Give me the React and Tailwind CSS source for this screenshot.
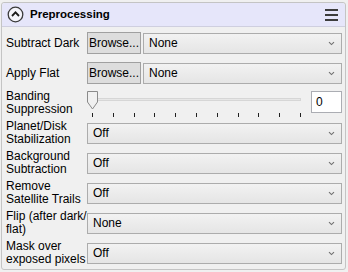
import React from 'react';

const font = { fontFamily: '"Liberation Sans", Arial, sans-serif' };

function Chevron() {
  return (
    <svg width="7" height="5" viewBox="0 0 7 5" className="text-[#707070]">
      <path d="M1 1.2 L3.5 3.6 L6 1.2" fill="none" stroke="currentColor" strokeWidth="1.1" />
    </svg>
  );
}

function Select({ value }) {
  return (
    <div className="flex-1 h-[21px] flex items-center justify-between pl-[5px] pr-[6px] border border-[#acacac] bg-gradient-to-b from-[#f2f2f2] to-[#e5e5e5] text-[12px]">
      <span>{value}</span>
      <Chevron />
    </div>
  );
}

function Row({ label, children }) {
  return (
    <div className="h-[30px] flex items-center">
      <div className="w-[85px] pl-[4px] text-[12px] leading-[13px] shrink-0">{label}</div>
      <div className="flex-1 flex items-center pr-[3px]">{children}</div>
    </div>
  );
}

export default function App() {
  const ticks = Array.from({ length: 11 }, (_, i) => i);

  return (
    <div className="w-[348px] h-[272px] bg-[#f0f0f0] pt-[2px] pl-[1px] pr-[2px] text-black" style={font}>
      <div className="border border-[#c4c4c4] rounded-[3px] h-[268px] flex flex-col">
        <div className="h-[24px] bg-[#e6e6fa] border-b border-[#cfcfdf] flex items-center pl-[5px] pr-[7px] rounded-t-[3px]">
          <svg width="17" height="17" viewBox="0 0 17 17">
            <circle cx="8.5" cy="8.5" r="7.3" fill="#f4f4fb" stroke="#3a3a3a" strokeWidth="1.3" />
            <path d="M5 10 L8.5 6.4 L12 10" fill="none" stroke="#1a1a1a" strokeWidth="1.8" />
          </svg>
          <span className="ml-[6px] font-bold text-[11.5px]">Preprocessing</span>
          <div className="ml-auto flex flex-col gap-[3px]">
            <div className="w-[13px] h-[2px] bg-[#3c3c3c]" />
            <div className="w-[13px] h-[2px] bg-[#3c3c3c]" />
            <div className="w-[13px] h-[2px] bg-[#3c3c3c]" />
          </div>
        </div>

        <div className="flex flex-col pt-[1px]">
          <Row label="Subtract Dark">
            <div className="w-[54px] h-[22px] flex items-center justify-center border border-[#a0a0a0] bg-[#dddddd] text-[12px] mr-[2px]">Browse...</div>
            <Select value="None" />
          </Row>
          <Row label="Apply Flat">
            <div className="w-[54px] h-[22px] flex items-center justify-center border border-[#a0a0a0] bg-[#dddddd] text-[12px] mr-[2px]">Browse...</div>
            <Select value="None" />
          </Row>
          <Row label={<>Banding<br />Suppression</>}>
            <div className="flex-1 flex flex-col h-[28px] relative">
              <div className="h-[3px] mt-[9px] ml-[4px] mr-[2px] bg-[#e7e7e7] border border-[#d6d6d6]" />
              <div className="flex justify-between ml-[5px] mr-[2px] mt-[12px]">
                {ticks.map((t) => (
                  <div key={t} className="w-[1px] h-[4px] bg-[#202020]" />
                ))}
              </div>
              <svg width="12" height="21" viewBox="0 0 12 21" className="absolute left-0 top-[2px]">
                <path d="M0.5 0.5 H10.5 V11 L5.5 18 L0.5 11 Z" fill="#f0f0f0" stroke="#8a8a8a" />
              </svg>
            </div>
            <div className="w-[31px] h-[22px] bg-white border border-[#abadb3] text-[12px] flex items-center pl-[4px] ml-[8px] mb-[2px]">0</div>
          </Row>
          <Row label={<>Planet/Disk<br />Stabilization</>}>
            <Select value="Off" />
          </Row>
          <Row label={<>Background<br />Subtraction</>}>
            <Select value="Off" />
          </Row>
          <Row label={<>Remove<br />Satellite Trails</>}>
            <Select value="Off" />
          </Row>
          <Row label={<>Flip (after dark/<br />flat)</>}>
            <Select value="None" />
          </Row>
          <Row label={<>Mask over<br />exposed pixels</>}>
            <Select value="Off" />
          </Row>
        </div>
      </div>
    </div>
  );
}
